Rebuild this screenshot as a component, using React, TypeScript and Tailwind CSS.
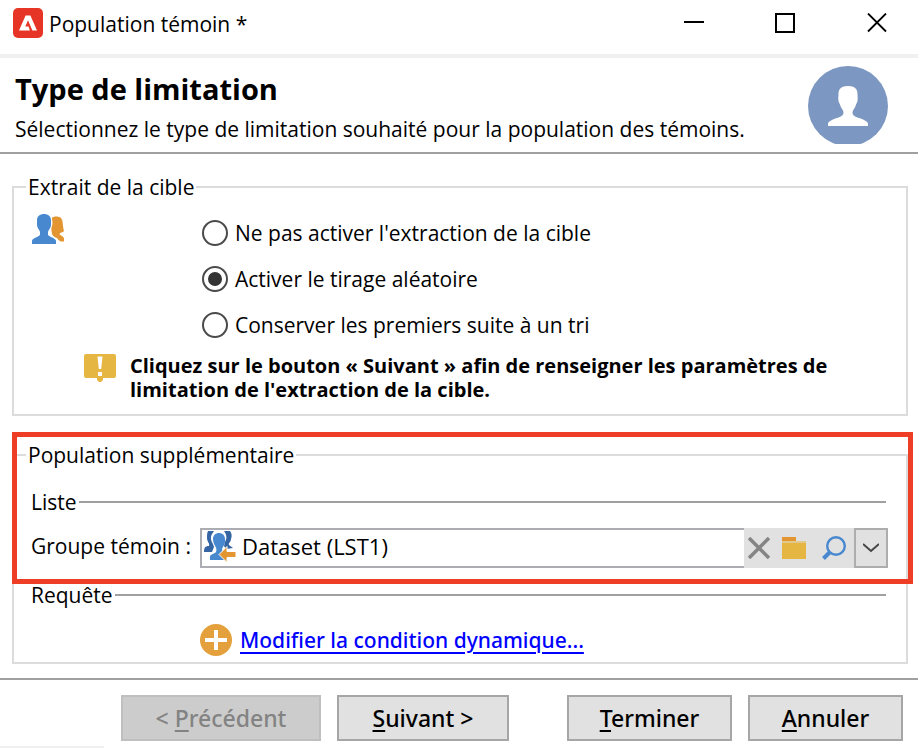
import { useState } from 'react'

const EXTRACTION_OPTIONS = [
  { id: 'none', label: "Ne pas activer l'extraction de la cible" },
  { id: 'random', label: 'Activer le tirage aléatoire' },
  { id: 'sorted', label: 'Conserver les premiers suite à un tri' },
]

function AppLogo() {
  return (
    <svg width="30" height="30" viewBox="0 0 30 30" className="shrink-0" aria-hidden="true">
      <rect width="30" height="30" rx="5" fill="#e63526" />
      <path d="M12.6 7.500h4.800L24 22.500h-4.600L15 12.300l-2.700 6.300h3.200l1.400 3.900H6z" fill="#fff" />
    </svg>
  )
}

function ProfileIcon() {
  return (
    <svg width="80" height="78" viewBox="0 0 80 78" className="shrink-0" aria-hidden="true">
      <circle cx="40" cy="40" r="40" fill="#7c97c1" />
      <path
        d="M40 20c7 0 9.500 3 9.500 8 0 3 .5 4 0 7-.4 2-1.500 3-2 5-1 3-3 4-3 6.500 0 3 2.500 4 6.500 5.500 5 1.500 9 3.500 9 6v2H20v-2c0-2.500 4-4.500 9-6 4-1.500 6.500-2.500 6.500-5.500 0-2.500-2-3.500-3-6.500-.5-2-1.600-3-2-5-.5-3 0-4 0-7 0-5 2.500-8 9.500-8z"
        fill="#fff"
      />
    </svg>
  )
}

function PeopleIcon() {
  return (
    <svg width="32" height="30" viewBox="0 0 32 30" className="shrink-0" aria-hidden="true">
      <path d="M20 4c1-2 7-2 9 0 2 2.500 1.500 5 2 8 .3 2 .5 3 1 5-1 1.500-4 1.500-4.500 3 .5 1.500 4.500 2.500 4.500 4.500v3c-3 .5-5-.5-7-3.500-2-.5-4-1.500-5-4 0-3-1.500-4 0-8 1-3 0-5 0-8z" fill="#e39532" />
      <path d="M5 6c0-8 14-8 14 0v5c0 3-2.500 4.500-3 7v3c2 2.500 8 3 8 6v3H0v-3c0-3 6-3.500 8-6v-3c-.5-2.500-3-4-3-7z" fill="#4788cf" />
    </svg>
  )
}

function WarningIcon() {
  return (
    <svg width="32" height="28" viewBox="0 0 32 28" className="shrink-0" aria-hidden="true">
      <path d="M2 0h28a2 2 0 0 1 2 2v20a2 2 0 0 1-2 2H19v2l-2 2h-2l-2-2v-2H2a2 2 0 0 1-2-2V2a2 2 0 0 1 2-2z" fill="#e5b742" />
      <path d="M13.500 2.500h5L17.200 15h-2.400zM14 18h4v4h-4z" fill="#fff" />
    </svg>
  )
}

function GroupIcon() {
  return (
    <svg width="32" height="32" viewBox="0 0 32 32" className="shrink-0" aria-hidden="true">
      <path d="M4 1h6L8 4c-2 3-1 7 1 10l1 3-2 5H0c0-4 1-6 5-6 1-3-2-4-2-8 0-3 0-5 1-7zM20 1h6c2 3 2 5 1 8 0 3-3 4-2 6l4 3-7 1-2-3 1-4c2-3 2-7-1-11z" fill="#3566a3" />
      <path d="M9 9c0-8 12-8 12 0 1 5-2 7-3 10 0 3 2 4 3 6v5H6v-3c0-3 4-3 6-5 2-5-3-6-3-13z" fill="#4788cf" />
      <path d="M15 24.500l8-8v5h9v6h-9v5z" fill="#e39532" stroke="#fff" strokeWidth="1" />
    </svg>
  )
}

function PlusIcon() {
  return (
    <svg width="32" height="32" viewBox="0 0 32 32" className="shrink-0" aria-hidden="true">
      <circle cx="16" cy="16" r="16" fill="#e3a03c" />
      <path d="M14 6h4v8h9v4h-9v8h-4v-8H5v-4h9z" fill="#fff" />
    </svg>
  )
}

function LineHeading({ children }: { children: React.ReactNode }) {
  return (
    <div className="mr-[2px] flex h-7 items-center gap-[2px]">
      <h2>{children}</h2>
      <div className="h-[2px] flex-1 bg-[#a0a0a0]" />
    </div>
  )
}

function Mnemonic({ children }: { children: string }) {
  return <span className="underline decoration-2 underline-offset-3">{children}</span>
}

const footerButton =
  "h-[46px] border-2 border-[#a6a6a6] bg-[#e1e1e1] font-['Noto_Sans','Open_Sans',sans-serif] text-[23px] font-medium disabled:border-[#bfbfbf] disabled:bg-[#cccccc] disabled:text-[#838383]"

export default function App() {
  const [extraction, setExtraction] = useState('random')
  const [group, setGroup] = useState('Dataset (LST1)')

  return (
    <div className="bg-white pr-[2px] font-['Open_Sans','Noto_Sans',sans-serif] text-[21px] leading-7 text-black">
      {/* Title bar */}
      <header className="flex h-[58px] items-center border-b-4 border-[#f0f0f0] pb-2 pl-[13px] pr-[30px]">
        <AppLogo />
        <span className="ml-[6px] flex-1 pt-[2px]">Population témoin *</span>
        <div className="flex items-center gap-[71px]">
          <button aria-label="Réduire">
            <svg width="20" height="20" viewBox="0 0 20 20" stroke="#000" strokeWidth="2">
              <path d="M0 9h20" />
            </svg>
          </button>
          <button aria-label="Agrandir">
            <svg width="20" height="20" viewBox="0 0 20 20" fill="none" stroke="#000" strokeWidth="2">
              <path d="M1 1h18v18H1z" />
            </svg>
          </button>
          <button aria-label="Fermer">
            <svg width="22" height="20" viewBox="0 0 22 20" stroke="#000" strokeWidth="1.800">
              <path d="M2 .5l18 18M20 .5L2 18.500" />
            </svg>
          </button>
        </div>
      </header>

      {/* Step heading */}
      <div className="flex h-24 items-center border-b-2 border-[#a0a0a0] pl-[15px] pr-[30px]">
        <div className="flex-1 pt-2">
          <h1 className="text-[29px] font-bold leading-10">Type de limitation</h1>
          <p className="leading-10">Sélectionnez le type de limitation souhaité pour la population des témoins.</p>
        </div>
        <ProfileIcon />
      </div>

      <main className="pb-[14px] pl-3 pr-[10px] pt-[19px]">
        <fieldset className="border-2 border-[#dcdcdc] pb-3 pl-[18px] pr-[18px]">
          <legend className="-ml-[6px] px-[2px]">Extrait de la cible</legend>
          <div className="flex pt-[9px]">
            <div className="w-[170px] pt-1">
              <PeopleIcon />
            </div>
            <div>
              {EXTRACTION_OPTIONS.map(o => (
                <label key={o.id} className="flex h-[46px] items-center gap-[7px]">
                  <input
                    type="radio"
                    name="extraction"
                    checked={extraction === o.id}
                    onChange={() => setExtraction(o.id)}
                    className="size-[26px] appearance-none rounded-full border-2 border-[#4a4a4a] bg-white bg-clip-content p-1 checked:bg-[#333333]"
                  />
                  {o.label}
                </label>
              ))}
            </div>
          </div>
          <div className="flex gap-[14px] pl-[52px] pt-[6px]">
            <WarningIcon />
            <p className="text-[20px] font-bold leading-6">
              Cliquez sur le bouton « Suivant » afin de renseigner les paramètres de limitation de l'extraction de la cible.
            </p>
          </div>
        </fieldset>

        <div className="relative mt-[25px]">
          <fieldset className="border-2 border-[#dcdcdc] pb-[6px] pl-[17px] pr-[18px]">
            <legend className="-ml-[5px] px-[2px]">Population supplémentaire</legend>
            <div className="pt-[19px]">
              <LineHeading>Liste</LineHeading>
            </div>
            <div className="mt-3 flex items-center">
              <label htmlFor="group" className="w-[169px] pb-1">Groupe témoin :</label>
              <div className="flex h-10 flex-1">
                <div className="flex flex-1 items-center gap-[6px] border-2 border-r-0 border-[#abadb3] pb-1 pl-[2px]">
                  <GroupIcon />
                  <input
                    id="group"
                    value={group}
                    onChange={e => setGroup(e.target.value)}
                    className="min-w-0 flex-1 text-[22px] outline-none"
                  />
                </div>
                <div className="flex items-center bg-[#e1e1e1]">
                  <button aria-label="Effacer" onClick={() => setGroup('')} className="flex w-[30px] justify-center">
                    <svg width="22" height="22" viewBox="0 0 22 22" stroke="#858585" strokeWidth="3.600">
                      <path d="M1 1l20 20M21 1L1 21" />
                    </svg>
                  </button>
                  <button aria-label="Parcourir" className="flex w-10 justify-center">
                    <svg width="24" height="22" viewBox="0 0 24 22">
                      <path d="M0 0h14v4H0z" fill="#e39532" />
                      <path d="M0 4h24v2H0z" fill="#e0c98a" />
                      <path d="M0 6h24v16H0z" fill="#e5b742" />
                    </svg>
                  </button>
                  <button aria-label="Rechercher" className="flex w-10 justify-center">
                    <svg width="24" height="24" viewBox="0 0 24 24" fill="none" stroke="#4788cf">
                      <circle cx="14" cy="10" r="8.800" strokeWidth="2.400" />
                      <path d="M8 16l-6.500 6.500" strokeWidth="4" />
                    </svg>
                  </button>
                  <button aria-label="Choisir" className="flex h-10 w-[34px] items-center justify-center border-2 border-[#adadad]">
                    <svg width="16" height="10" viewBox="0 0 16 10" fill="none" stroke="#444" strokeWidth="2">
                      <path d="M0 1l8 7 8-7" />
                    </svg>
                  </button>
                </div>
              </div>
            </div>
            <div className="mt-[13px]">
              <LineHeading>Requête</LineHeading>
            </div>
            <div className="flex items-center gap-2 pl-[169px] pt-[15px]">
              <PlusIcon />
              <a
                href="#condition"
                className="font-['Noto_Sans','Open_Sans',sans-serif] font-medium text-[#0000ff] underline decoration-2 underline-offset-4"
              >
                Modifier la condition dynamique...
              </a>
            </div>
          </fieldset>
          {/* Highlight around the list selection */}
          <div className="pointer-events-none absolute -right-[5px] -top-[9px] left-0 h-[152px] border-5 border-[#ee3f26]" />
        </div>
      </main>

      <footer className="border-t-2 border-[#a0a0a0]">
        <div className="flex justify-end gap-4 pb-[5px] pr-[15px] pt-[15px]">
          <button disabled className={`${footerButton} w-[200px]`}>
            &lt; <Mnemonic>P</Mnemonic>récédent
          </button>
          <button className={`${footerButton} mr-[42px] w-[172px]`}>
            <Mnemonic>S</Mnemonic>uivant &gt;
          </button>
          <button className={`${footerButton} w-[165px]`}>
            <Mnemonic>T</Mnemonic>erminer
          </button>
          <button className={`${footerButton} w-[155px]`}>
            <Mnemonic>A</Mnemonic>nnuler
          </button>
        </div>
        <div className="h-[2px] w-[104px] bg-[#f0f0f0]" />
      </footer>
    </div>
  )
}
